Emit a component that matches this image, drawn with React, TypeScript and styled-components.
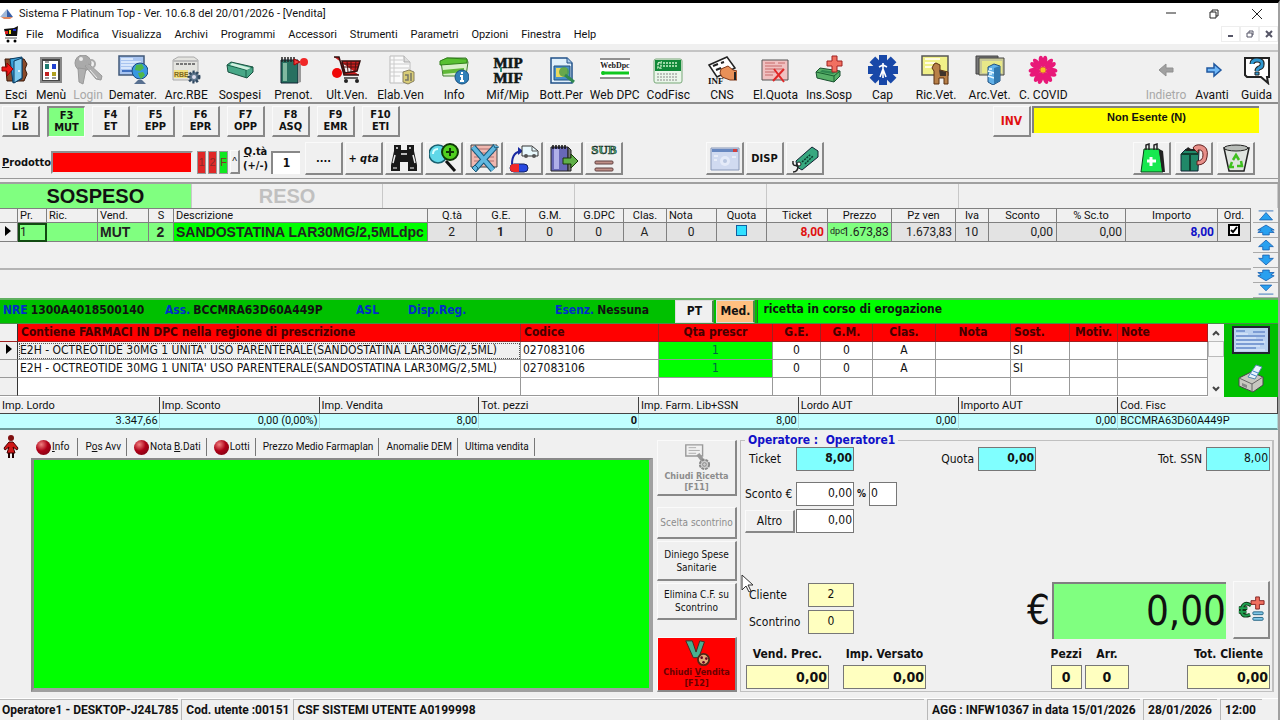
import React from "react";
import styled, { createGlobalStyle, css } from "styled-components";

const tahoma = `"DejaVu Sans Condensed", "DejaVu Sans", sans-serif`;
const system = `"Roboto", "Liberation Sans", sans-serif`;
const arial = `"Liberation Sans", sans-serif`;

const GlobalStyle = createGlobalStyle`
  * { box-sizing: border-box; }
  body { margin: 0; background: #f0f0f0; color: #111; }
  button, input { font: inherit; color: inherit; margin: 0; padding: 0; border-radius: 0; }
  button { cursor: default; }
`;

/* ---------- window frame ---------- */

const Window = styled.div`
  min-height: 100vh;
  display: flex;
  flex-direction: column;
  border-top: 3px solid #000;
  border-right: 2px solid #a0a0a0;
  background: #f0f0f0;
  font: 11px/14px ${system};
`;

const TitleBar = styled.header`
  height: 21px;
  display: flex;
  align-items: center;
  gap: 6px;
  background: #fff;
  h1 { flex: 1; margin: 0; font: 11px/14px ${system}; }
`;

const CaptionButton = styled.button`
  width: 43px;
  height: 20px;
  border: 0;
  background: none;
  display: grid;
  place-items: center;
`;

const CaptionGroup = styled.div`display: flex;`;

const MenuBar = styled.nav`
  height: 20px;
  display: flex;
  align-items: center;
  background: #fff;
  padding-left: 3px;
`;

const MenuItem = styled.button`
  border: 0;
  background: none;
  padding: 1px 7px 0 6px;
  white-space: nowrap;
`;

const ChildButton = styled.button`
  width: 19px;
  height: 16px;
  border: 1px solid #eee;
  background: #fff;
  display: grid;
  place-items: center;
`;

const Push = styled.span`flex: 1;`;

/* ---------- toolbar ---------- */

const Toolbar = styled.div`
  margin-top: 6px;
  height: 54px;
  border-top: 2px solid #c4c4c4;
  border-bottom: 2px solid #8c8c8c;
  display: grid;
  grid-template-columns: 32px 38px 36px minmax(0, 1fr) 73px 46px 46px 43px;
`;

const ToolStrip = styled.div`
  grid-column: span 2;
  margin-right: 73px;
  display: grid;
  grid-template-columns: repeat(18, minmax(0, 1fr));
`;

const ToolButton = styled.button`
  border: 0;
  background: none;
  display: flex;
  flex-direction: column;
  align-items: center;
  justify-content: space-between;
  padding-top: 3px;
  white-space: nowrap;
  font-size: 12px;
  &:disabled { color: #a8a8a8; }
`;

const raised = css`
  border-style: solid;
  border-width: 1px 2px 2px 1px;
  border-color: #fafafa #888 #888 #fafafa;
  background: #f0f0f0;
`;

const KeyRow = styled.div`
  height: 38px;
  display: flex;
  align-items: flex-start;
  padding: 2px 19px 0 2px;
  gap: 7px;
`;

const KeyButton = styled.button<{ $active?: boolean }>`
  ${raised}
  width: 38px;
  height: 31px;
  font: bold 11px/12px ${tahoma};
  text-align: center;
  ${(p) => p.$active && css`
    background: #80ff80;
    border-color: #888 #fafafa #fafafa #888;
    border-width: 2px 1px 1px 2px;
  `}
`;

const InvButton = styled.button`
  ${raised}
  width: 38px;
  height: 31px;
  color: #e01010;
  font: bold 12px/14px ${tahoma};
`;

const Exemption = styled.output`
  width: 227px;
  height: 27px;
  margin-left: -6px;
  border: 2px solid #808080;
  border-right: 0;
  border-bottom: 0;
  background: #ff0;
  text-align: center;
  font: bold 11px/18px ${arial};
`;

const ProductRow = styled.form`
  height: 37px;
  display: flex;
  align-items: center;
  border-bottom: 1px solid #999;
  padding: 0 23px 3px 2px;
  gap: 2px;
  font: bold 11px/13px ${tahoma};
`;

const ProductInput = styled.input`
  width: 142px;
  height: 23px;
  margin: 7px 2px 0 0;
  border: 2px solid #909090;
  border-right-color: #eee;
  border-bottom-color: #eee;
  background: #f00;
`;

const ProductLabel = styled.label`
  margin-top: 7px;
  width: 47px;
  font-size: 11px;
  white-space: nowrap;
`;

const Chip = styled.button<{ $tone: string }>`
  width: 9px;
  height: 23px;
  margin-top: 7px;
  border: 1px solid #999;
  background: ${(p) => p.$tone};
  color: #8a2a2a;
  font: 11px/12px ${arial};
`;

const Caret = styled.button`
  ${raised}
  width: 10px;
  height: 24px;
  margin-top: 7px;
  font: 10px/10px ${arial};
`;

const QtyLabel = styled.label`
  width: 27px;
  text-align: center;
  font: bold 11px/14px ${tahoma};
  span { display: block; }
`;

const QtyInput = styled.input`
  width: 29px;
  height: 23px;
  margin: 7px 3px 0 0;
  border: 2px solid #888;
  border-right: 0;
  border-bottom: 0;
  background: #fff;
  text-align: center;
  font-size: 12px;
`;

const ActionButton = styled.button<{ $italic?: boolean }>`
  ${raised}
  width: 38px;
  height: 33px;
  display: grid;
  place-items: center;
  font: bold 11px/13px ${tahoma};
  font-style: ${(p) => (p.$italic ? "italic" : "normal")};
`;

const BasketGroup = styled.div`
  display: flex;
  gap: 4px;
`;

const Gap = styled.span`width: 79px;`;

/* ---------- sale mode tabs ---------- */

const ModeTabs = styled.div`
  margin-top: 3px;
  height: 26px;
  border-top: 2px solid #a0a0a0;
  display: grid;
  grid-template-columns: 3fr 3fr 3fr 3fr 3fr 5fr;
`;

const ModeTab = styled.button<{ $active?: boolean }>`
  border: 0;
  border-right: 1px solid #c8c8c8;
  background: ${(p) => (p.$active ? "#80ff80" : "none")};
  font: bold 20px/24px ${arial};
  &:disabled { color: #c0c0c0; }
`;

/* ---------- sale grid ---------- */

const SaleArea = styled.section`
  height: 90px;
  display: flex;
  gap: 2px;
`;

const SaleTable = styled.table`
  width: 100%;
  table-layout: fixed;
  border-collapse: separate;
  border-spacing: 0;
  border-top: 1px solid #808080;
  font: 12px/18px ${system};
  th {
    height: 14px;
    padding: 0 2px;
    border: solid #808080;
    border-width: 0 1px 1px 0;
    font: 11px/13px ${system};
    overflow: hidden;
    white-space: nowrap;
  }
`;

const SaleMain = styled.div`
  flex: 1;
  display: flex;
  flex-direction: column;
`;

const SaleLine = styled.div`
  height: 28px;
  border-bottom: 2px solid #b4b4b4;
`;

const Cell = styled.td<{ $bg?: string; $align?: string; $color?: string; $bold?: boolean; $size?: number }>`
  height: 19px;
  padding: 0 3px 0 2px;
  border: solid #808080;
  border-width: 0 1px 1px 0;
  background: ${(p) => p.$bg || "#e3e3e3"};
  color: ${(p) => p.$color || "#222"};
  text-align: ${(p) => p.$align || "center"};
  font-weight: ${(p) => (p.$bold ? "bold" : "normal")};
  font-size: ${(p) => p.$size || 12}px;
  font-family: ${(p) => (p.$size ? arial : system)};
  white-space: nowrap;
  overflow: hidden;
  sup { margin-right: -2px; font-size: 9px; line-height: 9px; vertical-align: 2px; }
`;

const CurrentCell = styled(Cell)`
  outline: 2px solid #114a11;
  outline-offset: -2px;
`;

const QuotaBox = styled.input`
  appearance: none;
  width: 11px;
  height: 11px;
  border: 1px solid #1060a0;
  background: #30e0ff;
  vertical-align: baseline;
`;

const OrderBox = styled.input`
  appearance: none;
  width: 12px;
  height: 12px;
  border: 2px solid #000;
  background: #fff;
`;

const TickBox = styled.label`
  display: inline-grid;
  place-items: center;
  input, svg { grid-area: 1 / 1; }
`;

const NavColumn = styled.div`
  width: 25px;
  display: grid;
  grid-template-rows: repeat(6, 15px);
`;

const NavButton = styled.button`
  border: 0;
  border-bottom: 1px solid #aaa;
  background: #f0f0f0;
  display: grid;
  place-items: center;
`;

/* ---------- prescription ---------- */

const RecipeBar = styled.section`
  height: 26px;
  display: flex;
  border-top: 2px solid #60b060;
  border-bottom: 1px solid #4a8a4a;
  background: #00c000;
  font: bold 12px/21px ${tahoma};
`;

const RecipeData = styled.dl`
  flex: 1 1 676px;
  margin: 0;
  padding-left: 3px;
  display: grid;
  grid-template-columns: 162px 191px 52px 147px 1fr;
`;

const RecipeItem = styled.div`
  display: flex;
  gap: 3px;
  white-space: nowrap;
  dt { color: #0030c8; }
  dd { margin: 0; }
`;

const RecipeButton = styled.button<{ $bg: string }>`
  width: 39px;
  height: 23px;
  border: 1px solid #ddd;
  border-right: 2px solid #4a8a4a;
  background: ${(p) => p.$bg};
  margin-right: 2px;
`;

const RecipeState = styled.output`
  flex: 1 1 521px;
  padding-left: 5px;
  border-left: 1px solid #2a6a2a;
  background: #0f0;
  line-height: 19px;
`;

const DrugArea = styled.section`
  display: flex;
  align-items: stretch;
  height: 73px;
  background: #00c000;
`;

const DrugMain = styled.div`
  flex: 1;
  min-width: 0;
  background: #fff;
`;

const DrugTable = styled.table`
  width: 100%;
  table-layout: fixed;
  border-collapse: separate;
  border-spacing: 0;
  font: 12px/17px ${tahoma};
  th {
    height: 18px;
    padding: 0 3px;
    border: solid #a02020;
    border-width: 0 1px 1px 0;
    background: #f00;
    color: #400;
    font: bold 12px/17px ${tahoma};
    text-align: center;
    white-space: nowrap;
    overflow: hidden;
  }
  td {
    height: 18px;
    padding: 0 2px;
    border: solid #999;
    border-width: 0 1px 1px 0;
    white-space: nowrap;
    overflow: hidden;
    text-align: center;
  }
  th:first-child, td:first-child {
    background: #f0f0f0;
    border-right: 1px solid #333;
  }
  th.left, td.left { text-align: left; }
  td.qty { background: #0f0; color: #064; }
  td.focus {
    background: #f0f0f0;
    outline: 1px dotted #555;
    outline-offset: -2px;
  }
`;

const ScrollBar = styled.div`
  width: 16px;
  display: flex;
  flex-direction: column;
  background: #f4f4f4;
  button {
    height: 17px;
    border: 0;
    background: #f4f4f4;
    display: grid;
    place-items: center;
  }
`;

const Thumb = styled.span`
  height: 16px;
  border: 1px solid #bbb;
  background: #f8f8f8;
`;

const DrugTools = styled.div`
  width: 54px;
  display: flex;
  flex-direction: column;
  align-items: center;
  justify-content: space-between;
  padding: 1px 0 4px;
  button { border: 0; background: none; display: grid; }
`;

/* ---------- totals strip ---------- */

const Totals = styled.table`
  width: 100%;
  table-layout: fixed;
  border-collapse: separate;
  border-spacing: 0;
  font: 11px/14px ${system};
  th {
    height: 17px;
    padding: 1px 2px 0;
    border-right: 1px solid #444;
    border-bottom: 1px solid #444;
    text-align: left;
    font-weight: normal;
  }
  td {
    height: 16px;
    padding: 0 1px;
    border-right: 1px solid #b0d8d8;
    border-bottom: 2px solid #6a9a9a;
    background: #c0ffff;
    text-align: right;
  }
  td:nth-child(4) { font-weight: bold; }
  td:last-child { text-align: left; padding-left: 2px; }
`;

/* ---------- lower panels ---------- */

const Lower = styled.main`
  flex: 1;
  display: flex;
  min-height: 266px;
`;

const SideStrip = styled.aside`
  width: 31px;
  padding: 5px 0 0 3px;
`;

const InfoPanel = styled.section`
  flex: 1 1 622px;
  display: flex;
  flex-direction: column;
  padding-bottom: 6px;
`;

const InfoTabs = styled.div`
  height: 28px;
  padding: 8px 0 0 4px;
  display: flex;
`;

const InfoTab = styled.button`
  height: 18px;
  padding: 0 5px 0 7px;
  border: 0;
  border-right: 1px solid #777;
  background: none;
  display: flex;
  align-items: center;
  font: 10px/16px ${system};
  white-space: nowrap;
  &:first-child { padding: 0 8px 0 1px; }
`;

const Bullet = styled.i`
  width: 15px;
  height: 15px;
  margin-right: 1px;
  border-radius: 50%;
  background: radial-gradient(circle at 35% 30%, #f08080, #b00018 45%, #700010);
`;

const InfoText = styled.textarea`
  flex: 1;
  width: 100%;
  resize: none;
  display: block;
  border: solid #888;
  border-width: 2px 4px 4px 3px;
  border-right-color: #a0a0a0;
  border-bottom-color: #a0a0a0;
  background: #0f0;
`;

const Commands = styled.div`
  width: 80px;
  margin: 10px 3px 6px 4px;
  display: flex;
  flex-direction: column;
  gap: 2px;
`;

const Command = styled.button<{ $height: number; $strong?: boolean; $alert?: boolean }>`
  ${raised}
  height: ${(p) => p.$height}px;
  font: 10px/13px ${tahoma};
  display: flex;
  flex-direction: column;
  align-items: center;
  justify-content: center;
  white-space: nowrap;
  &:disabled { color: #8c8c8c; }
  ${(p) => p.$strong && css`font: bold 9px/11px ${tahoma};`}
  ${(p) => p.$alert && css`
    margin-top: auto;
    background: #f00;
    color: #6a0000;
  `}
`;

const CommandGap = styled.span`height: 7px;`;

const Operator = styled.fieldset`
  flex: 1;
  min-width: 0;
  margin: 3px 4px 6px 0;
  padding: 0 2px 2px 4px;
  border: 1px solid #c0c0c0;
  border-right: 2px solid #c0c0c0;
  legend {
    padding: 0 3px;
    color: #1010c8;
    font: bold 12px/14px ${tahoma};
    white-space: pre;
  }
`;

const OperatorBody = styled.div`
  height: 100%;
  display: flex;
  flex-direction: column;
  font: 12px/14px ${tahoma};
`;

const Line = styled.div<{ $gap?: number }>`
  display: flex;
  align-items: center;
  height: 24px;
  margin-bottom: ${(p) => p.$gap || 3}px;
`;

const Caption = styled.label<{ $width: number; $end?: boolean }>`
  width: ${(p) => p.$width}px;
  padding: 0 4px;
  text-align: ${(p) => (p.$end ? "right" : "left")};
  white-space: nowrap;
`;

const Box = styled.input<{ $w: number; $bg?: string; $align?: string; $bold?: boolean; $big?: boolean }>`
  width: ${(p) => p.$w}px;
  height: 24px;
  padding: 0 1px 3px;
  border: 1px solid #777;
  background: ${(p) => p.$bg || "#fff"};
  text-align: ${(p) => p.$align || "right"};
  font: 12px/14px ${tahoma};
  font-weight: ${(p) => (p.$bold ? "bold" : "normal")};
  ${(p) => p.$big && css`font-size: 14px; padding-bottom: 1px;`}
`;

const TightCaption = styled.label`
  width: 51px;
  white-space: nowrap;
`;

const PercentCaption = styled.label`
  width: 15px;
  text-align: center;
  font-weight: bold;
  font-size: 10px;
`;

const AltroButton = styled.button`
  ${raised}
  width: 50px;
  height: 23px;
  margin-right: 1px;
`;

const Middle = styled.div`
  margin-top: auto;
  display: flex;
  align-items: center;
`;

const Euro = styled.label`
  margin-left: auto;
  font: 40px/56px ${tahoma};
`;

const Amount = styled.input`
  width: 174px;
  height: 57px;
  margin: 0 7px 0 2px;
  border: 2px solid #808080;
  border-right: 0;
  border-bottom: 0;
  background: #80ff80;
  text-align: right;
  font: 40px/50px ${tahoma};
`;

const EuroButton = styled.button`
  ${raised}
  width: 37px;
  height: 58px;
  display: grid;
  place-items: center;
`;

const Bottom = styled.div`
  display: flex;
  gap: 3px;
  padding: 8px 0 0 1px;
`;

const Stack = styled.label<{ $auto?: boolean; $ml?: number }>`
  display: flex;
  flex-direction: column;
  align-items: center;
  gap: 3px;
  margin-left: ${(p) => (p.$auto ? "auto" : (p.$ml || 0) + "px")};
  font: bold 12px/15px ${tahoma};
  white-space: nowrap;
`;

/* ---------- status bar ---------- */

const StatusBar = styled.footer`
  height: 22px;
  display: flex;
  gap: 3px;
  padding-right: 16px;
  border-top: 1px solid #fff;
  font: bold 12px/21px ${system};
`;

const StatusCell = styled.span<{ $w?: number }>`
  flex: ${(p) => (p.$w ? `0 0 ${p.$w}px` : "1")};
  padding-left: 4px;
  border: solid #b8b8b8;
  border-width: 1px 0 0 1px;
  white-space: nowrap;
  &:first-child { padding-left: 2px; border-left: 0; }
`;

const Pointer = styled.svg`
  position: absolute;
  left: 0;
  top: 140px;
  pointer-events: none;
`;

const PointerHost = styled.div`
  position: relative;
  display: flex;
  flex: 1 1 538px;
  min-width: 0;
`;

/* ---------- drawings ---------- */

const Ico = ({ s = 30, children }: { s?: number; children: React.ReactNode }) => (
  <svg width={s} height={s} viewBox="0 0 30 30" fill="none" aria-hidden="true">{children}</svg>
);

const petal = "M15 14L11 8Q10 2 12 1 14 0 15 3 16 0 18 1 20 2 19 8z";
const serif = `"Liberation Serif", serif`;

const icons: Record<string, React.ReactNode> = {
  esci: <><path d="M4 4h19l3 5-2 5 2 5-3 7H6z" fill="#8a4a2a" stroke="#3a1808" /><path d="M9 4l12-2v22l-9 4z" fill="#38a0d8" stroke="#0a3a60" /><path d="M13 6l8-3v20l-8 5z" fill="#80ccf0" stroke="#0a3a60" /><circle cx="18" cy="16" r="1" fill="#fff" /><path d="M1 12h5V8l6 6-6 7v-5H1z" fill="#f01818" stroke="#900" /></>,
  menu: <><path d="M5 3h20v24H5z" fill="#444" stroke="#888" strokeWidth="2" /><path d="M7 6h15v19H7z" fill="#fff" /><path d="M9 9h4v5H9z" fill="#207a70" /><path d="M16 9h4v5h-4z" fill="#2040d0" /><path d="M9 17h4v4H9z" fill="#c02020" /><path d="M16 17h4v4h-4z" fill="#b0a020" /><path d="M9 23h4M16 23h4M9 7h4" stroke="#333" /></>,
  login: <><circle cx="10" cy="8" r="8" fill="#aaa" stroke="#999" /><circle cx="8" cy="4" r="2" fill="#eee" /><path d="M5 13l1 14 4 2 3-15zM12 11l11 13 5 1 1-4-13-12z" fill="#b0b0b0" stroke="#999" /><path d="M17 15l7 8" stroke="#eee" /><circle cx="18" cy="9" r="4" stroke="#aaa" strokeWidth="2" /></>,
  demater: <><path d="M1 1h25v19H1z" fill="#a8c4f0" stroke="#405878" strokeWidth="1.5" /><path d="M3 4h12M3 7h20M3 10h14M3 13h10" stroke="#e8f2ff" strokeWidth="1.5" /><path d="M4 16h10" stroke="#4070c0" strokeWidth="2" /><circle cx="22" cy="16" r="8" fill="#3898e0" stroke="#1a4a80" /><path d="M18 10l6-1 2 4-4 3-5-1zM20 18l5-1 2 3-4 4-2-3z" fill="#50b848" /><path d="M16 29h12l-4-4h-4z" fill="#587090" /></>,
  rbe: <><path d="M2 5l5-3h16l4 3v20H2z" fill="#e4e4e0" stroke="#aaa" /><path d="M2 6h25" stroke="#bbb" strokeWidth="2" /><path d="M5 9h19" stroke="#777" strokeWidth="2" strokeDasharray="3 1" /><path d="M3 15h14v8H3z" fill="#f0e080" /><text x="3" y="22" fontFamily={arial} fontWeight="bold" fontSize="7" fill="#806820">RBE</text><circle cx="23" cy="22" r="5" fill="#607890" stroke="#304860" strokeWidth="3" strokeDasharray="2 1.6" /><circle cx="23" cy="22" r="2" fill="#dde" /></>,
  sospesi: <><path d="M2 10l4-3 22 5v5l-6 6L3 17z" fill="#48a888" stroke="#1a5040" /><path d="M2 10l19 5 7-3M21 15v8" stroke="#186048" /><path d="M5 10l2-2 19 5-4 2z" fill="#d0f0e0" /></>,
  prenot: <><path d="M3 5h17v23H3z" fill="#287060" stroke="#123" /><path d="M5 8h4v18H5z" fill="#80b8a0" /><path d="M4 2v5M7 2v5M10 2v5M13 2v5M16 2v5" stroke="#222" strokeWidth="1.5" /><path d="M20 7l3 2v18l-3 1z" fill="#999" /><circle cx="26" cy="7" r="4" fill="#f02828" /><path d="M16 4l6 3-6 3z" fill="#f04040" stroke="#a00" /></>,
  ultven: <><path d="M2 2h5l5 18h15M10 6h18l-3 10-12 2z" fill="#c82020" stroke="#301010" strokeWidth="1.5" /><path d="M11 9h16M12 12h14M15 6l1 11M19 6v11M24 6l-1 10" stroke="#501010" /><path d="M12 23h14" stroke="#333" strokeWidth="1.5" /><circle cx="14" cy="26" r="2" fill="#222" /><circle cx="25" cy="26" r="2" fill="#222" /><circle cx="5" cy="18" r="5" fill="#f00808" /></>,
  elab: <><path d="M4 1h14l6 6v21H4z" fill="#fafafa" stroke="#bbb" /><path d="M4 5h13M4 9h19M4 13h19M4 17h14M4 21h10M8 1v27" stroke="#ccc" /><path d="M18 1v6h6" fill="#ddd" stroke="#aaa" /><path d="M17 17l6-2 5 2v9l-6 3-5-2z" fill="#d8cc78" stroke="#888060" /><path d="M19 20h3v5h-3M25 18v8" stroke="#776" strokeWidth="1.5" /></>,
  info: <><path d="M2 6l6-3h19l2 4-2 14H4z" fill="#d8f0c8" stroke="#408030" /><path d="M1 6l7-3 20 1v4L1 10z" fill="#58c030" stroke="#308018" /><path d="M4 15l21-2v4l-21 2z" fill="#60b838" /><circle cx="23" cy="22" r="7" fill="#3080b8" stroke="#185080" /><path d="M23 17v2M21 21h2v5M21 26h4" stroke="#fff" strokeWidth="2" /></>,
  mif: <g fontFamily={serif} fontWeight="bold" fontSize="15" fill="#101818" stroke="#101818" strokeWidth=".6"><text x="15" y="13" textAnchor="middle">MIP</text><text x="15" y="28" textAnchor="middle">MIF</text><path d="M8 12v5" stroke="#289080" strokeWidth="2" /></g>,
  bott: <><path d="M5 3h16l5 5v20H5z" fill="#e0f0fc" stroke="#205088" strokeWidth="1.5" /><path d="M21 3v5h5" fill="#a8c8e8" stroke="#205088" /><path d="M8 11h16v14H8z" fill="#4890c8" stroke="#205080" /><path d="M10 13h11v9H10z" fill="#e8d860" /><circle cx="18" cy="17" r="5" fill="#50a048" opacity=".85" /><path d="M19 20l9 7" stroke="#308850" strokeWidth="3" /></>,
  webdpc: <><path d="M0 4h30M0 23h30" stroke="#333" /><path d="M0 5h30v17H0z" fill="#fff" /><path d="M2 18h27" stroke="#10c820" strokeWidth="3" /><circle cx="3" cy="18" r="2" fill="#10c820" /><text x="15" y="13" textAnchor="middle" fontFamily={serif} fontWeight="bold" fontSize="8" fill="#222">WebDpc</text></>,
  codfisc: <><rect x="1" y="4" width="28" height="24" rx="2" fill="#eaf6ea" stroke="#78a878" /><path d="M2 5h26v11H2z" fill="#108838" /><path d="M5 8l3-1v6H5zM10 8h14M10 11h14" stroke="#c8f0c8" strokeWidth="1.5" strokeDasharray="2 1" /><path d="M4 19h20M4 22h20M4 25h20" stroke="#888" strokeDasharray="2 1" /></>,
  cns: <><path d="M2 10l18-8 8 11-18 9z" fill="#fff" stroke="#222" strokeWidth="1.5" /><path d="M6 11l5-2M14 8l3-1M9 15l5-2" stroke="#222" strokeWidth="2" /><path d="M14 14l7-3 5 4 4 1v9h-7l-8-3-2-4z" fill="#e89058" stroke="#803818" /><path d="M28 17v8" stroke="#222" strokeWidth="2" /><text x="1" y="29" fontFamily={serif} fontWeight="bold" fontSize="9" fill="#111">INF</text></>,
  elquota: <><path d="M2 5h26v20H2z" fill="#f0c0c0" stroke="#555" /><path d="M5 8h10M18 8h7M5 11h17M5 14h18M5 17h10M5 20h8" stroke="#c86868" /><path d="M14 14l10 13M24 14L13 26" stroke="#e02828" strokeWidth="2" /></>,
  inssosp: <><path d="M2 17l4-4 20 3v5l-6 6L3 23z" fill="#58b068" stroke="#1a5030" /><path d="M2 17l18 4 6-5M20 21v6" stroke="#186030" /><path d="M6 17l2-2 14 2-3 2z" fill="#308850" /><path d="M18 1h5v5h5v5h-5v6h-5v-6h-5V6h5z" fill="#f07060" stroke="#a02020" /></>,
  cap: <><g fill="#1848a8"><path d="M11 0h8v30h-8z" /><path d="M11 0h8v30h-8z" transform="rotate(45 15 15)" /><path d="M0 11h30v8H0z" /><path d="M0 11h30v8H0z" transform="rotate(45 15 15)" /></g><path d="M15 8v15M11 12l4-2 4 2M12 22l3-8 3 8" stroke="#fff" strokeWidth="1.6" /></>,
  ricvet: <><path d="M1 1h26v19H1z" fill="#f0f088" stroke="#555" strokeWidth="1.5" /><path d="M4 4h15M4 8h10M4 12h9" stroke="#fffce0" strokeWidth="2" /><path d="M13 9l2-1 4 2v5l8 2v12h-4v-6h-5v6h-5V16l-2-3z" fill="#b88048" stroke="#5a3010" /><path d="M18 15l7 2v4h-6z" fill="#40342c" /></>,
  arcvet: <><path d="M1 1h22v18H1z" fill="#777" stroke="#444" /><path d="M4 3h25v17H4z" fill="#c8c898" stroke="#444" /><path d="M7 6h20v12H7z" fill="#e8e888" /><path d="M13 12l6-3 6 2v15l-7 4-5-3z" fill="#60b0e8" stroke="#205080" /><path d="M13 16l6 2M13 21l6 2M14 14h3M14 19h3" stroke="#e8f8ff" strokeWidth="1.5" /><path d="M19 13l6-2v15l-6 3z" fill="#3078b0" /></>,
  covid: <><g fill="#e81878">{[0, 51, 103, 154, 206, 257, 309].map((a) => <path key={a} d={petal} transform={`rotate(${a} 15 15)`} />)}</g><circle cx="15" cy="15" r="3" fill="#f8c020" stroke="#e06040" /></>,
  indietro: <path d="M8 15l7-6v4h7v4h-7v4z" fill="#a0a0a0" stroke="#909090" />,
  avanti: <path d="M24 15l-7-6v4h-7v4h7v4z" fill="#70b8f8" stroke="#2058a0" strokeWidth="1.5" />,
  guida: <><path d="M3 3h24v19h-2l1 6-7-6H5l-2-2z" fill="#fff" stroke="#222" strokeWidth="2" /><path d="M10 9q0-4 5-4 6 0 5 5 0 2-3 3-2 1-2 3" stroke="#222" strokeWidth="5" /><path d="M10 9q0-4 5-4 6 0 5 5 0 2-3 3-2 1-2 3" stroke="#3098d0" strokeWidth="3" /><path d="M13 17h4v3h-4z" fill="#3098d0" stroke="#222" /></>,
  binocoli: <><path d="M5 2h7v5h6V2h7v6l3 14v6h-9v-9h-8v9H2v-6L5 8z" fill="#181818" /><path d="M7 5h2M20 5h2M6 12l-2 8M24 12l2 8M12 11h6" stroke="#eee" strokeWidth="1.5" /><path d="M4 25h4M21 25h4" stroke="#888" strokeWidth="2" /></>,
  lente: <><circle cx="9" cy="11" r="9" fill="#60d8e8" stroke="#186070" strokeWidth="1.5" /><path d="M17 18l9 10" stroke="#111" strokeWidth="3" /><path d="M4 11q0-5 5-5" stroke="#d8ffff" strokeWidth="2" /><circle cx="21" cy="9" r="8" fill="#50d020" stroke="#103808" strokeWidth="2" /><path d="M21 5v8M17 9h8" stroke="#103808" strokeWidth="2" /></>,
  attrezzi: <><path d="M2 2h26v22H2z" fill="#f0b8b0" stroke="#444" /><path d="M5 6h20M5 10h20M5 14h20M5 18h20" stroke="#b07070" /><path d="M4 4l20 23M26 4L6 26" stroke="#185878" strokeWidth="6" /><path d="M4 4l20 23M26 4L6 26" stroke="#60b8e0" strokeWidth="4" /><path d="M3 25l3-3 3 3-2 4zM24 1l2 4 4-1" fill="#60b8e0" stroke="#185878" /></>,
  furgone: <><path d="M3 21Q3 8 14 8" stroke="#1828a0" strokeWidth="2" /><path d="M9 4l5 4-5 4z" fill="#1828a0" /><path d="M13 3h10l6 5v5H13z" fill="#e8f8fc" stroke="#333" /><path d="M23 4v4h5" stroke="#555" /><circle cx="17" cy="13" r="2" fill="#555" /><circle cx="25" cy="13" r="2" fill="#555" /><rect x="1" y="21" width="18" height="8" rx="4" fill="#2848e0" stroke="#102060" /><path d="M10 21H5a4 4 0 0 0 0 8h5z" fill="#f02828" /></>,
  libro: <><path d="M2 4h17v24H2z" fill="#6868b8" stroke="#222" /><path d="M5 6h5v20H5z" fill="#b0b0e8" /><path d="M4 2v4M7 2v4M10 2v4M13 2v4M16 2v4" stroke="#111" strokeWidth="1.5" /><path d="M19 4l3 3v21h-3z" fill="#777" stroke="#222" /><path d="M14 15h8v-4l7 7-7 7v-4h-8z" fill="#60b048" stroke="#183808" /></>,
  sub: <><text x="15" y="11" textAnchor="middle" fontFamily={serif} fontWeight="bold" fontSize="13" fill="#50b080" stroke="#182820" strokeWidth=".6">SUB</text><rect x="6" y="18" width="18" height="3" rx="1" fill="#c09088" stroke="#604040" /><rect x="6" y="25" width="18" height="3" rx="1" fill="#c09088" stroke="#604040" /></>,
  finestra: <><path d="M1 5h28v22H1z" fill="#d0daf0" stroke="#8898b8" /><path d="M2 6h26v3H2z" fill="#6888c0" /><path d="M23 6h4v3h-4z" fill="#d04040" /><circle cx="15" cy="18" r="5" fill="#e4eaf8" /><circle cx="15" cy="18" r="2" fill="#b8c6e0" /><path d="M4 13h4M4 17h3M22 14h4" stroke="#fff" /></>,
  sconto: <><path d="M6 18L22 4l6 4v6L12 27l-5-3z" fill="#38a880" stroke="#123" /><path d="M12 19l9-8M15 21l8-8" stroke="#0a4030" strokeWidth="1.5" strokeDasharray="2 1" /><circle cx="9" cy="21" r="2" fill="#fff" stroke="#222" /><path d="M8 22q-6 2-5-4M8 23q0 6-5 6" stroke="#222" strokeWidth="1.5" /></>,
  borsa: <><path d="M7 6h15l4 23H4z" fill="#18e850" stroke="#0a4018" /><path d="M22 6l4 2 2 21h-3z" fill="#222" /><path d="M9 7V2l3-1v6M17 7V2l3-1v6" stroke="#222" strokeWidth="1.5" /><path d="M14 14v9M10 18h9" stroke="#fff" strokeWidth="3" /></>,
  scatola: <><path d="M2 11l5-5 13 1-1 21H2z" fill="#208868" stroke="#123" /><path d="M2 11h17M11 11v17" stroke="#104030" strokeWidth="2" /><path d="M6 8l3-4 4 3 3-4 3 5z" fill="#222" /><path d="M14 5q2-4 8-3 8 2 6 12-1 8-10 8v-4q6 0 6-6t-5-5v3z" fill="#e8908a" stroke="#602020" /></>,
  cestino: <><path d="M3 5h25l-5 23H8z" fill="#e0e4e0" stroke="#222" strokeWidth="1.5" /><ellipse cx="15" cy="5" rx="12" ry="3" fill="#b8bcb8" stroke="#222" /><path d="M12 17l3-5 3 5M20 18l1 5h-5M13 24H9l2-5" stroke="#40c020" strokeWidth="2.5" /></>,
  stampante: <><path d="M3 15l12-6 12 5v8l-10 7-14-6z" fill="#c8c8c0" stroke="#444" /><path d="M3 15l13 6 11-7M16 21v8" stroke="#666" /><path d="M12 14l8-12 6 2-7 12z" fill="#e8f4fc" stroke="#58a" /><path d="M17 8l5 2M15 11l5 2" stroke="#48c" /><path d="M6 20l5 2v3l-5-2z" fill="#888" /></>,
  euro: <><path d="M15 10q-8-5-10 4-1 10 9 6M2 13h9M2 17h8" stroke="#103818" strokeWidth="4" /><path d="M15 10q-8-5-10 4-1 10 9 6M2 13h9M2 17h8" stroke="#20a050" strokeWidth="2" /><path d="M20 1h4v4h5v4h-5v5h-4V9h-5V5h5z" fill="#f07060" stroke="#802020" /><rect x="17" y="17" width="11" height="3" rx="1" fill="#80c8e8" stroke="#206080" /><rect x="17" y="23" width="11" height="3" rx="1" fill="#80c8e8" stroke="#206080" /></>,
  chiudiRic: <><path d="M3 2h18v12H3z" stroke="#999" strokeWidth="1.5" /><path d="M6 5h8M6 8h12M6 11h8" stroke="#aaa" /><path d="M16 12l6 8" stroke="#999" strokeWidth="4" /><circle cx="23" cy="23" r="5" fill="#ccc" stroke="#888" strokeWidth="2" strokeDasharray="3 1" /><circle cx="23" cy="23" r="2" stroke="#888" /></>,
  chiudiVen: <><path d="M3 2h7l4 12 4-12 5 1-6 17h-6z" fill="#48b090" stroke="#402820" /><circle cx="22" cy="22" r="6" fill="#e0a878" stroke="#502818" strokeWidth="2" /><circle cx="20" cy="20" r="1.4" fill="#602" /><circle cx="25" cy="21" r="1.4" fill="#602" /><circle cx="22" cy="25" r="1.4" fill="#602" /></>,
};

const navShapes = [
  "M2 2h18M3 13l8-9 8 9z",
  "M1 7l10-6 10 6h-4l4 3h-6v3H7v-3H1l4-3z",
  "M2 9l9-8 9 8h-5v4H7V9z",
  "M2 5l9 8 9-8h-5V1H7v4z",
  "M1 4h6V1h8v3h6l-4 3 4 1-10 6L1 8l4-1z",
  "M4 1h14l-7 7zM2 12h18",
];

const tools: [string, string][] = [
  ["Demater.", "demater"], ["Arc.RBE", "rbe"], ["Sospesi", "sospesi"], ["Prenot.", "prenot"],
  ["Ult.Ven.", "ultven"], ["Elab.Ven", "elab"], ["Info", "info"], ["Mif/Mip", "mif"],
  ["Bott.Per", "bott"], ["Web DPC", "webdpc"], ["CodFisc", "codfisc"], ["CNS", "cns"],
  ["El.Quota", "elquota"], ["Ins.Sosp", "inssosp"], ["Cap", "cap"], ["Ric.Vet.", "ricvet"],
  ["Arc.Vet.", "arcvet"], ["C. COVID", "covid"],
];

const Tool = ({ label, icon, disabled }: { label: string; icon: string; disabled?: boolean }) => (
  <ToolButton disabled={disabled}>
    <Ico>{icons[icon]}</Ico>
    <span>{label}</span>
  </ToolButton>
);

const menus = ["File", "Modifica", "Visualizza", "Archivi", "Programmi", "Accessori", "Strumenti", "Parametri", "Opzioni", "Finestra", "Help"];
const keys = ["F2 LIB", "F3 MUT", "F4 ET", "F5 EPP", "F6 EPR", "F7 OPP", "F8 ASQ", "F9 EMR", "F10 ETI"];

const saleColumns: [string, number?, string?][] = [
  ["", 18], ["Pr.", 29, "left"], ["Ric.", 51, "left"], ["Vend.", 51, "left"], ["S", 25], ["Descrizione", undefined, "left"],
  ["Q.tà", 49], ["G.E.", 49], ["G.M.", 49], ["G.DPC", 49], ["Clas.", 43], ["Nota", 50, "left"], ["Quota", 50],
  ["Ticket", 61], ["Prezzo", 64], ["Pz ven", 64], ["Iva", 33], ["Sconto", 68], ["% Sc.to", 69], ["Importo", 92], ["Ord.", 33],
];

const drugColumns: [string, number?, string?][] = [
  ["", 18], ["Contiene FARMACI IN DPC nella regione di prescrizione", undefined, "left"], ["Codice", 138, "left"],
  ["Qta prescr", 114], ["G.E.", 48], ["G.M.", 52], ["Clas.", 63], ["Nota", 75], ["Sost.", 59, "left"],
  ["Motiv.", 48], ["Note", 90, "left"],
];

const drug = "E2H - OCTREOTIDE 30MG 1 UNITA' USO PARENTERALE(SANDOSTATINA LAR30MG/2,5ML)";

const totals: [string, string][] = [
  ["Imp. Lordo", "3.347,66"], ["Imp. Sconto", "0,00 (0,00%)"], ["Imp. Vendita", "8,00"], ["Tot. pezzi", "0"],
  ["Imp. Farm. Lib+SSN", "8,00"], ["Lordo AUT", "0,00"], ["Importo AUT", "0,00"], ["Cod. Fisc", "BCCMRA63D60A449P"],
];

const RowMark = () => (
  <svg width="8" height="10" viewBox="0 0 8 10" aria-hidden="true"><path d="M1 0l6 5-6 5z" fill="#000" /></svg>
);

export default function App() {
  return (
    <>
      <GlobalStyle />
      <Window>
        <TitleBar>
          <svg width="13" height="12" viewBox="0 0 13 12" aria-hidden="true">
            <path d="M0 9l7-8v8z" fill="#a0b8d8" /><path d="M7 1l6 8H7z" fill="#3860a8" /><path d="M1 9h12l-3 2H4z" fill="#e08860" />
          </svg>
          <h1>Sistema F Platinum Top - Ver. 10.6.8 del 20/01/2026 - [Vendita]</h1>
          <CaptionGroup>
            <CaptionButton aria-label="Riduci a icona"><svg width="10" height="10"><path d="M0 4h10" stroke="#222" /></svg></CaptionButton>
            <CaptionButton aria-label="Ripristina"><svg width="10" height="10" fill="none" stroke="#222"><path d="M1 3h6v6H1zM3 3V1h6v6H7" /></svg></CaptionButton>
            <CaptionButton aria-label="Chiudi"><svg width="10" height="10" stroke="#222"><path d="M0 0l10 10M10 0L0 10" /></svg></CaptionButton>
          </CaptionGroup>
        </TitleBar>
        <MenuBar>
          <svg width="17" height="17" viewBox="0 0 17 17" aria-hidden="true">
            <path d="M1 3l10-1 4-2-1 10H3z" fill="#111" /><path d="M2 5h3v3H2z" fill="#e02020" /><path d="M6 4h2v4H6z" fill="#f0e020" /><path d="M10 3h3v2h-3z" fill="#2030d0" /><path d="M2 12h12" stroke="#555" /><circle cx="5" cy="15" r="1.5" /><circle cx="12" cy="15" r="1.5" />
          </svg>
          {menus.map((m) => <MenuItem key={m}>{m}</MenuItem>)}
          <Push />
          <ChildButton aria-label="Riduci"><svg width="8" height="8"><path d="M1 6h5" stroke="#556" strokeWidth="2" /></svg></ChildButton>
          <ChildButton aria-label="Ripristina finestra"><svg width="8" height="8" fill="none" stroke="#556"><path d="M1 3h5v4H1zM3 3V1h4v4H6" /></svg></ChildButton>
          <ChildButton aria-label="Chiudi finestra"><svg width="8" height="8" stroke="#556" strokeWidth="2"><path d="M1 1l6 6M7 1L1 7" /></svg></ChildButton>
        </MenuBar>

        <Toolbar>
          <Tool label="Esci" icon="esci" />
          <Tool label="Menù" icon="menu" />
          <Tool label="Login" icon="login" disabled />
          <ToolStrip>{tools.map(([l, i]) => <Tool key={l} label={l} icon={i} />)}</ToolStrip>
          <Tool label="Indietro" icon="indietro" disabled />
          <Tool label="Avanti" icon="avanti" />
          <Tool label="Guida" icon="guida" />
        </Toolbar>

        <KeyRow>
          {keys.map((k) => {
            const [a, b] = k.split(" ");
            return <KeyButton key={k} $active={a === "F3"}>{a}<br />{b}</KeyButton>;
          })}
          <Push />
          <InvButton>INV</InvButton>
          <Exemption>Non Esente (N)</Exemption>
        </KeyRow>

        <ProductRow onSubmit={(e) => e.preventDefault()}>
          <ProductLabel htmlFor="prodotto"><u>P</u>rodotto</ProductLabel>
          <ProductInput id="prodotto" />
          <Chip type="button" $tone="#e02828">1</Chip>
          <Chip type="button" $tone="#e02828">2</Chip>
          <Chip type="button" $tone="#10e820">F</Chip>
          <Caret type="button">^</Caret>
          <QtyLabel htmlFor="qta"><span><u>Q</u>.tà</span><span>(+/-)</span></QtyLabel>
          <QtyInput id="qta" defaultValue="1" />
          <ActionButton type="button">....</ActionButton>
          <ActionButton type="button" $italic>+ qta</ActionButton>
          {["binocoli", "lente", "attrezzi", "furgone", "libro", "sub"].map((i) => (
            <ActionButton type="button" key={i} aria-label={i}><Ico>{icons[i]}</Ico></ActionButton>
          ))}
          <Gap />
          <ActionButton type="button" aria-label="finestra"><Ico>{icons.finestra}</Ico></ActionButton>
          <ActionButton type="button">DISP</ActionButton>
          <ActionButton type="button" aria-label="sconto"><Ico>{icons.sconto}</Ico></ActionButton>
          <Push />
          <BasketGroup>
            {["borsa", "scatola", "cestino"].map((i) => (
              <ActionButton type="button" key={i} aria-label={i}><Ico>{icons[i]}</Ico></ActionButton>
            ))}
          </BasketGroup>
        </ProductRow>

        <ModeTabs>
          <ModeTab $active>SOSPESO</ModeTab>
          <ModeTab disabled>RESO</ModeTab>
          <ModeTab disabled /><ModeTab disabled /><ModeTab disabled /><ModeTab disabled />
        </ModeTabs>

        <SaleArea>
          <SaleMain>
            <SaleTable>
              <colgroup>{saleColumns.map(([n, w]) => <col key={n} width={w} />)}</colgroup>
              <thead>
                <tr>{saleColumns.map(([n, , a]) => <th key={n} align={(a as "left") || "center"}>{n}</th>)}</tr>
              </thead>
              <tbody>
                <tr>
                  <Cell $bg="#f0f0f0"><RowMark /></Cell>
                  <CurrentCell $bg="#80ff80" $align="left">1</CurrentCell>
                  <Cell $bg="#80ff80" />
                  <Cell $bg="#80ff80" $align="left" $bold $size={14}>MUT</Cell>
                  <Cell $bg="#80ff80" $bold $size={14}>2</Cell>
                  <Cell $bg="#00ff00" $align="left" $bold $size={14}>SANDOSTATINA LAR30MG/2,5MLdpc</Cell>
                  <Cell>2</Cell>
                  <Cell $bold>1</Cell>
                  <Cell>0</Cell>
                  <Cell>0</Cell>
                  <Cell>A</Cell>
                  <Cell>0</Cell>
                  <Cell><QuotaBox type="checkbox" aria-label="Quota" /></Cell>
                  <Cell $align="right" $bold $color="#e01010">8,00</Cell>
                  <Cell $align="right" $bg="#80ff80"><sup>dpc</sup>1.673,83</Cell>
                  <Cell $align="right">1.673,83</Cell>
                  <Cell>10</Cell>
                  <Cell $align="right">0,00</Cell>
                  <Cell $align="right">0,00</Cell>
                  <Cell $align="right" $bold $color="#1010c8">8,00</Cell>
                  <Cell>
                    <TickBox>
                      <OrderBox type="checkbox" defaultChecked aria-label="Ord." />
                      <svg width="8" height="8" fill="none" stroke="#000" strokeWidth="2"><path d="M1 4l2 2 4-5" /></svg>
                    </TickBox>
                  </Cell>
                </tr>
              </tbody>
            </SaleTable>
            <SaleLine />
          </SaleMain>
          <NavColumn>
            {navShapes.map((d, i) => (
              <NavButton key={d} aria-label={`Scorri ${i + 1}`}>
                <svg width="18" height="14" viewBox="0 0 22 14"><path d={d} fill="#28a0f0" stroke="#1860b0" /></svg>
              </NavButton>
            ))}
          </NavColumn>
        </SaleArea>

        <RecipeBar>
          <RecipeData>
            <RecipeItem><dt>NRE</dt><dd>1300A4018500140</dd></RecipeItem>
            <RecipeItem><dt>Ass.</dt><dd>BCCMRA63D60A449P</dd></RecipeItem>
            <RecipeItem><dt>ASL</dt></RecipeItem>
            <RecipeItem><dt>Disp.Reg.</dt></RecipeItem>
            <RecipeItem><dt>Esenz.</dt><dd>Nessuna</dd></RecipeItem>
          </RecipeData>
          <RecipeButton $bg="#f0f0f0">PT</RecipeButton>
          <RecipeButton $bg="#ffc080">Med.</RecipeButton>
          <RecipeState>ricetta in corso di erogazione</RecipeState>
        </RecipeBar>

        <DrugArea>
          <DrugMain>
            <DrugTable>
              <colgroup>{drugColumns.map(([n, w]) => <col key={n} width={w} />)}</colgroup>
              <thead>
                <tr>{drugColumns.map(([n, , a]) => <th key={n} className={a}>{n}</th>)}</tr>
              </thead>
              <tbody>
                {[true, false].map((current) => (
                  <tr key={String(current)}>
                    <td>{current && <RowMark />}</td>
                    <td className={current ? "left focus" : "left"}>{drug}</td>
                    <td className="left">027083106</td>
                    <td className="qty">1</td>
                    <td>0</td><td>0</td><td>A</td><td /><td className="left">SI</td><td /><td />
                  </tr>
                ))}
                <tr>{drugColumns.map(([n]) => <td key={n} />)}</tr>
              </tbody>
            </DrugTable>
          </DrugMain>
          <ScrollBar>
            <button aria-label="Su"><svg width="8" height="6" fill="none" stroke="#444" strokeWidth="2"><path d="M1 5l3-3 3 3" /></svg></button>
            <Thumb />
            <Push />
            <button aria-label="Giù"><svg width="8" height="6" fill="none" stroke="#444" strokeWidth="2"><path d="M1 1l3 3 3-3" /></svg></button>
          </ScrollBar>
          <DrugTools>
            <button aria-label="Ricetta">
              <svg width="40" height="30" viewBox="0 0 40 30">
                <path d="M2 2h36v26H2z" fill="#b8d0f0" stroke="#223" strokeWidth="2" />
                <path d="M5 6h9M22 7h12M5 11h29M5 15h27M5 19h28M5 23h20" stroke="#7c9cd4" strokeWidth="2" />
                <path d="M5 9h12M5 13h20M5 17h29M5 21h24M5 25h29" stroke="#e4eefc" />
              </svg>
            </button>
            <button aria-label="Stampa"><Ico>{icons.stampante}</Ico></button>
          </DrugTools>
        </DrugArea>

        <Totals>
          <thead><tr>{totals.map(([n]) => <th key={n}>{n}</th>)}</tr></thead>
          <tbody><tr>{totals.map(([n, v]) => <td key={n}>{v}</td>)}</tr></tbody>
        </Totals>

        <Lower>
          <SideStrip>
            <svg width="16" height="24" viewBox="0 0 16 24" aria-hidden="true">
              <circle cx="8" cy="3" r="3" fill="#801010" />
              <path d="M6 7h4l5 6-1 2-4-3 2 6H4l2-6-4 3-1-2z" fill="#d01818" stroke="#400" />
              <path d="M6 18v5M10 18v5" stroke="#200" strokeWidth="2" />
            </svg>
          </SideStrip>
          <InfoPanel>
            <InfoTabs>
              <InfoTab><Bullet /><u>I</u>nfo</InfoTab>
              <InfoTab>P<u>o</u>s Avv</InfoTab>
              <InfoTab><Bullet />Nota&nbsp;<u>B</u>.Dati</InfoTab>
              <InfoTab><Bullet />Lotti</InfoTab>
              <InfoTab>Prezzo Medio Farmaplan</InfoTab>
              <InfoTab>Anomalie DEM</InfoTab>
              <InfoTab>Ultima vendita</InfoTab>
            </InfoTabs>
            <InfoText aria-label="Info" />
          </InfoPanel>
          <Commands>
            <Command $height={56} $strong disabled>
              <Ico s={28}>{icons.chiudiRic}</Ico>
              <span>Chiudi <u>R</u>icetta</span><span>[F11]</span>
            </Command>
            <CommandGap />
            <Command $height={32} disabled>Scelta scontrino</Command>
            <Command $height={40}><span>Diniego Spese</span><span>Sanitarie</span></Command>
            <Command $height={37}><span>Elimina C.F. su</span><span>Scontrino</span></Command>
            <Command $height={55} $strong $alert>
              <Ico s={28}>{icons.chiudiVen}</Ico>
              <span>Chiudi <u>V</u>endita</span><span>[F12]</span>
            </Command>
          </Commands>
          <PointerHost>
            <Operator>
              <legend>{"Operatore :  Operatore1"}</legend>
              <OperatorBody>
                <Line $gap={11}>
                  <Caption $width={51} htmlFor="ticket">Ticket</Caption>
                  <Box id="ticket" $w={58} $bg="#80ffff" $bold defaultValue="8,00" />
                  <Caption $width={124} $end htmlFor="quota">Quota</Caption>
                  <Box id="quota" $w={58} $bg="#80ffff" $bold defaultValue="0,00" />
                  <Push />
                  <Caption $width={57} $end htmlFor="ssn">Tot. SSN</Caption>
                  <Box id="ssn" $w={64} $bg="#80ffff" defaultValue="8,00" />
                </Line>
                <Line>
                  <TightCaption htmlFor="sconto">Sconto €</TightCaption>
                  <Box id="sconto" $w={58} defaultValue="0,00" />
                  <PercentCaption htmlFor="perc">%</PercentCaption>
                  <Box id="perc" $w={28} $align="left" defaultValue="0" />
                </Line>
                <Line>
                  <AltroButton>Altro</AltroButton>
                  <Box aria-label="Altro" $w={58} defaultValue="0,00" />
                </Line>
                <Middle>
                  <div>
                    <Line>
                      <Caption $width={63} htmlFor="cliente">Cliente</Caption>
                      <Box id="cliente" $w={46} $bg="#ffffc0" $align="center" defaultValue="2" />
                    </Line>
                    <Line>
                      <Caption $width={63} htmlFor="scontrino">Scontrino</Caption>
                      <Box id="scontrino" $w={46} $bg="#ffffc0" $align="center" defaultValue="0" />
                    </Line>
                  </div>
                  <Euro htmlFor="importo">€</Euro>
                  <Amount id="importo" defaultValue="0,00" />
                  <EuroButton aria-label="Calcola"><Ico s={28}>{icons.euro}</Ico></EuroButton>
                </Middle>
                <Bottom>
                  <Stack>Vend. Prec.<Box $w={83} $bg="#ffffc0" $bold $big defaultValue="0,00" /></Stack>
                  <Stack $ml={11}>Imp. Versato<Box $w={83} $bg="#ffffc0" $bold $big defaultValue="0,00" /></Stack>
                  <Stack $auto>Pezzi<Box $w={31} $bg="#ffffc0" $bold $big $align="center" defaultValue="0" /></Stack>
                  <Stack>Arr.<Box $w={44} $bg="#ffffc0" $bold $big $align="center" defaultValue="0" /></Stack>
                  <Stack $ml={55}>Tot. Cliente<Box $w={83} $bg="#ffffc0" $bold $big defaultValue="0,00" /></Stack>
                </Bottom>
              </OperatorBody>
            </Operator>
            <Pointer width="16" height="24" viewBox="0 0 16 24" aria-hidden="true">
              <path d="M2 5v15l4-4 3 6 2-1-3-6h5z" fill="#fff" stroke="#333" />
            </Pointer>
          </PointerHost>
        </Lower>

        <StatusBar>
          <StatusCell $w={178}>Operatore1 - DESKTOP-J24L785</StatusCell>
          <StatusCell $w={108}>Cod. utente :00151</StatusCell>
          <StatusCell>CSF SISTEMI UTENTE A0199998</StatusCell>
          <StatusCell $w={213}>AGG : INFW10367 in data 15/01/2026</StatusCell>
          <StatusCell $w={74}>28/01/2026</StatusCell>
          <StatusCell $w={42}>12:00</StatusCell>
        </StatusBar>
      </Window>
    </>
  );
}
